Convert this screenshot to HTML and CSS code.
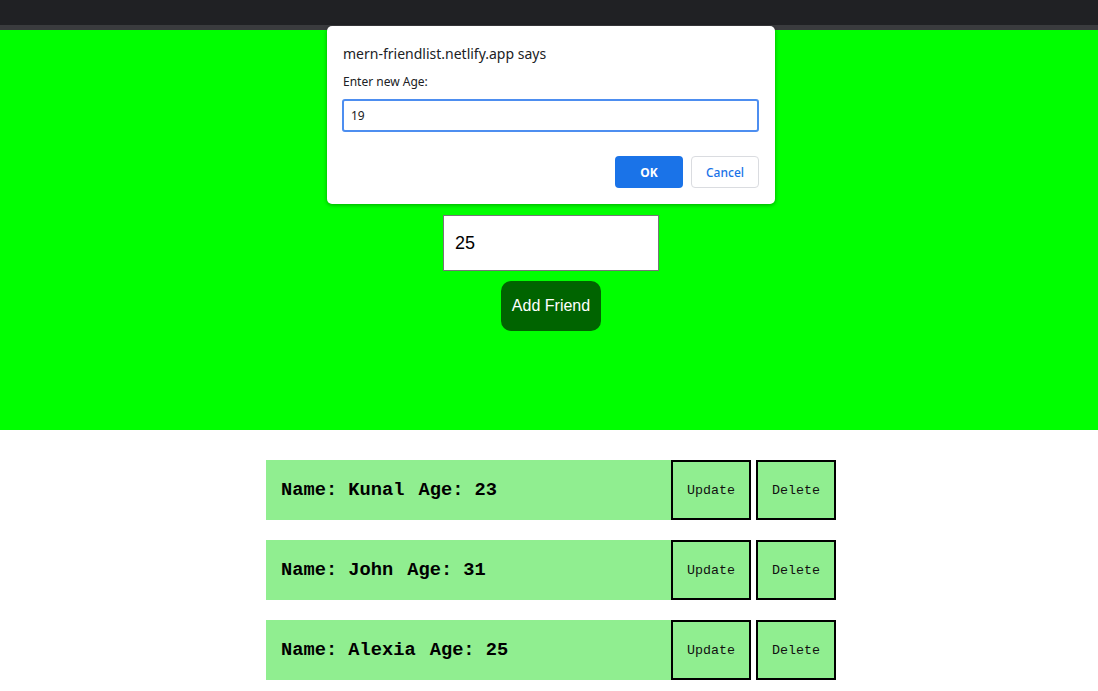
FILE: index.html
```html
<!DOCTYPE html>
<html>
<head>
<meta charset="utf-8">
<link rel="stylesheet" href="styles.css">
</head>
<body>
<div class="chrome"></div>
<div class="chrome-line"></div>
<section class="hero">
  <div class="form">
    <input class="field name-field" type="text" value="Kunal">
    <input class="field" type="text" value="25">
    <button class="add-btn">Add Friend</button>
  </div>
</section>
<section class="list">
  <div class="row">
    <div class="info"><h3>Name: Kunal</h3><h3>Age: 23</h3></div>
    <button class="act">Update</button>
    <button class="act">Delete</button>
  </div>
  <div class="row">
    <div class="info"><h3>Name: John</h3><h3>Age: 31</h3></div>
    <button class="act">Update</button>
    <button class="act">Delete</button>
  </div>
  <div class="row">
    <div class="info"><h3>Name: Alexia</h3><h3>Age: 25</h3></div>
    <button class="act">Update</button>
    <button class="act">Delete</button>
  </div>
</section>
<div class="dialog">
  <div class="d-title">mern-friendlist.netlify.app says</div>
  <div class="d-label">Enter new Age:</div>
  <div class="d-input">19</div>
  <div class="d-actions">
    <button class="d-ok">OK</button>
    <button class="d-cancel">Cancel</button>
  </div>
</div>
</body>
</html>
```

FILE: styles.css
```css
html, body {
  margin: 0;
  padding: 0;
  background: #ffffff;
  overflow: hidden;
}
.chrome {
  height: 25px;
  background: #202124;
}
.chrome-line {
  height: 5px;
  background: #3a3b3e;
}
.hero {
  background: #00ff00;
  height: 400px;
  box-sizing: border-box;
  padding-left: 4px;
  padding-top: 114px;
}
.form {
  display: flex;
  flex-direction: column;
  align-items: center;
  gap: 10px;
}
.field {
  width: 216px;
  height: 56px;
  box-sizing: border-box;
  border: 1px solid #767676;
  background: #fff;
  padding: 0 11px;
  font-family: "Liberation Sans", Arial, sans-serif;
  font-size: 18px;
  color: #000;
  margin: 0;
  outline: none;
}
.name-field {
  margin-bottom: 5px;
}
.add-btn {
  width: 100px;
  height: 50px;
  border: none;
  border-radius: 10px;
  background: #006400;
  color: #fff;
  font-family: "Liberation Sans", Arial, sans-serif;
  font-size: 16px;
  padding: 0;
}
.list {
  padding: 30px 0 0 4px;
  display: flex;
  flex-direction: column;
  align-items: center;
  gap: 20px;
}
.row {
  display: flex;
  height: 60px;
  width: 570px;
  gap: 5px;
}
.info {
  width: 405px;
  margin-right: -5px;
  background: #90ee90;
  display: flex;
  align-items: center;
  padding-left: 15px;
  box-sizing: border-box;
}
.info h3 {
  margin: 0 14px 0 0;
  font-family: "Liberation Mono", "Courier New", monospace;
  font-weight: bold;
  font-size: 18.72px;
  color: #000;
}
.act {
  width: 80px;
  height: 60px;
  box-sizing: border-box;
  border: 2px solid #000;
  background: #90ee90;
  font-family: "Liberation Mono", "Courier New", monospace;
  font-size: 13.33px;
  color: #111;
  padding: 0;
  margin: 0;
}
.dialog {
  position: absolute;
  left: 327px;
  top: 26px;
  width: 448px;
  height: 178px;
  box-sizing: border-box;
  background: #fff;
  border-radius: 5px;
  box-shadow: 0 1px 4px rgba(0,0,0,0.35);
  padding: 18px 16px 16px 15px;
  font-family: "Noto Sans", "Open Sans", sans-serif;
  color: #202124;
}
.d-title {
  font-size: 14px;
  line-height: 20px;
  padding-left: 1px;
}
.d-label {
  font-size: 12px;
  line-height: 16px;
  margin-top: 10px;
  padding-left: 1px;
}
.d-input {
  margin-top: 9px;
  height: 33px;
  box-sizing: border-box;
  border: 2px solid #4d8ef0;
  border-radius: 3px;
  font-size: 12px;
  line-height: 29px;
  padding-left: 7px;
  color: #202124;
}
.d-actions {
  margin-top: 24px;
  display: flex;
  justify-content: flex-end;
  gap: 8px;
}
.d-ok, .d-cancel {
  width: 68px;
  height: 32px;
  box-sizing: border-box;
  border-radius: 4px;
  font-family: "Noto Sans", "Open Sans", sans-serif;
  font-size: 12px;
  padding: 0;
}
.d-ok {
  background: #1a73e8;
  border: none;
  color: #fff;
  font-weight: bold;
}
.d-cancel {
  background: #fff;
  border: 1px solid #dadce0;
  color: #1a73e8;
  font-weight: 500;
}
```
